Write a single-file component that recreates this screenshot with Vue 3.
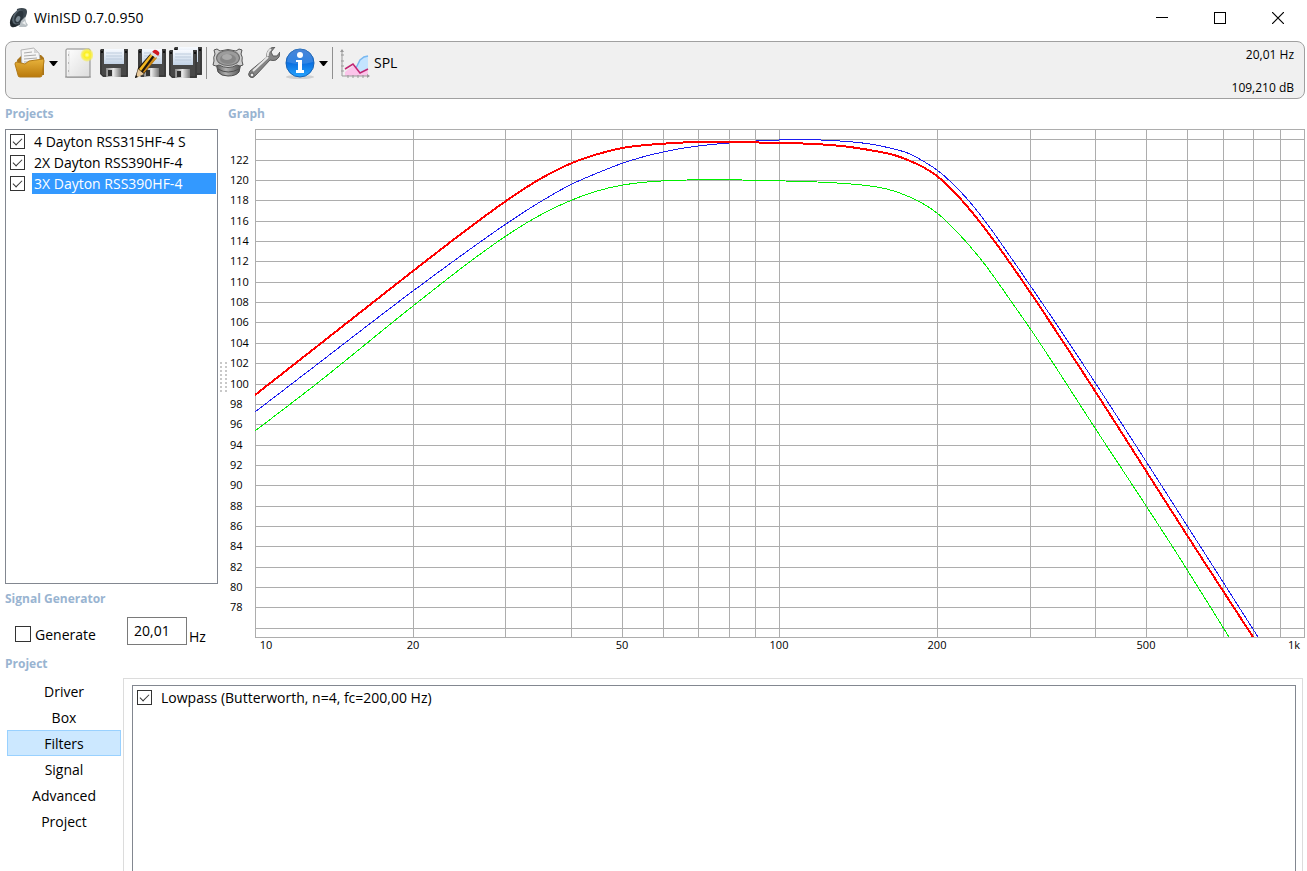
<template>
    <div class="window">
        <header class="title-bar">
            <svg class="app-icon" width="20" height="20" viewBox="0 0 20 20" aria-hidden="true">
                <path d="M8 1Q13 -1 17 1Q19 3 17 8L13 16L6 19Z" fill="#3b464e" />
                <ellipse cx="7" cy="11" rx="5" ry="9" transform="rotate(28 7 11)" fill="#20282e" />
                <ellipse cx="9" cy="9" rx="5" ry="8" transform="rotate(28 9 9)" fill="#56636d" />
                <ellipse cx="10" cy="9" rx="4" ry="7" transform="rotate(28 10 9)" fill="#2c363e" />
                <ellipse cx="9" cy="11" rx="2" ry="3" transform="rotate(28 9 11)" fill="#7d8b95" />
                <path d="M12 13L16 9L17 14L19 17L17 19H10Z" fill="#b9c0c4" />
                <path d="M13 15L16 13L17 17Z" fill="#eef0f1" />
            </svg>
            <span class="title">WinISD 0.7.0.950</span>
            <div class="window-buttons">
                <button type="button" aria-label="Minimize">
                    <svg width="12" height="12" viewBox="0 0 12 12"><rect y="5" width="12" height="1" /></svg>
                </button>
                <button type="button" aria-label="Maximize">
                    <svg width="12" height="12" viewBox="0 0 12 12"><path d="M0 0H12V12H0ZM1 1V11H11V1Z" fill-rule="evenodd" /></svg>
                </button>
                <button type="button" aria-label="Close">
                    <svg width="12" height="12" viewBox="0 0 12 12"><path d="M0 0L12 12M12 0L0 12" stroke="#000" stroke-width="1.2" /></svg>
                </button>
            </div>
        </header>

        <div class="toolbar">
            <div class="tools">
                <svg width="0" height="0" class="defs" aria-hidden="true">
                    <defs>
                        <linearGradient id="gold" x1="0" y1="0" x2="0" y2="1">
                            <stop offset="0" stop-color="#e8b33c" />
                            <stop offset="1" stop-color="#b9790b" />
                        </linearGradient>
                        <linearGradient id="paper" x1="0" y1="0" x2="1" y2="1">
                            <stop offset="0" stop-color="#ffffff" />
                            <stop offset="1" stop-color="#dcdcdc" />
                        </linearGradient>
                        <linearGradient id="sheet" x1="0" y1="0" x2="0" y2="1">
                            <stop offset="0" stop-color="#f7faff" />
                            <stop offset="1" stop-color="#c3d3e6" />
                        </linearGradient>
                        <linearGradient id="steel" x1="0" y1="0" x2="1" y2="0">
                            <stop offset="0" stop-color="#8b8b8b" />
                            <stop offset="0.5" stop-color="#e6e6e6" />
                            <stop offset="1" stop-color="#777777" />
                        </linearGradient>
                        <linearGradient id="basket" x1="0" y1="0" x2="1" y2="0">
                            <stop offset="0" stop-color="#5a5a5a" />
                            <stop offset="0.4" stop-color="#b0b0b0" />
                            <stop offset="1" stop-color="#505050" />
                        </linearGradient>
                        <linearGradient id="blue" x1="0" y1="0" x2="0" y2="1">
                            <stop offset="0" stop-color="#2a6fd0" />
                            <stop offset="0.5" stop-color="#0b6fe0" />
                            <stop offset="1" stop-color="#25a5ff" />
                        </linearGradient>
                        <radialGradient id="glow">
                            <stop offset="0" stop-color="#ffffb0" />
                            <stop offset="0.4" stop-color="#fcf01e" />
                            <stop offset="0.75" stop-color="#f8ee4c" stop-opacity="0.8" />
                            <stop offset="1" stop-color="#f8ee4c" stop-opacity="0" />
                        </radialGradient>
                        <g id="disk">
                            <path d="M1 0H28V28H3L0 25V1Z" fill="#484848" />
                            <path d="M1 1H27V27H3L1 25Z" fill="none" stroke="#303030" />
                            <rect x="4" y="0" width="20" height="15" fill="url(#sheet)" />
                            <path d="M6 4H22M6 7H22M6 10H22" stroke="#bdcbdc" />
                            <rect x="1" y="2" width="2" height="2" fill="#111" />
                            <rect x="25" y="2" width="2" height="2" fill="#111" />
                            <rect x="6" y="19" width="15" height="9" fill="url(#steel)" />
                            <rect x="8" y="21" width="4" height="6" fill="#333" />
                        </g>
                    </defs>
                </svg>

                <button type="button" class="tool" aria-label="Open project">
                    <svg width="32" height="32" viewBox="0 0 32 32">
                        <path d="M3 13L8 8H27L30 11V28H4Z" fill="#a8741a" />
                        <path d="M7 3L20 1L25 6L27 20H8Z" fill="#f5f5f5" stroke="#b5b5b5" />
                        <path d="M10 6L18 5M10 9L22 8M10 12L23 11M10 15H24" stroke="#aaa" />
                        <path d="M20 1V6H25Z" fill="#d5d5d5" />
                        <path d="M1 17Q1 15 3 15L11 17L15 14L29 12Q30 12 30 14L28 28Q28 30 26 30H6Q4 30 4 28Z" fill="url(#gold)" stroke="#b27b18" />
                    </svg>
                </button>
                <button type="button" class="arrow" aria-label="Recent projects">
                    <svg width="9" height="5" viewBox="0 0 9 5"><path d="M0 0H9L5 5H4Z" /></svg>
                </button>
                <button type="button" class="tool tool-new" aria-label="New project">
                    <svg width="32" height="32" viewBox="0 0 32 32">
                        <path d="M4 30H30" stroke="#888" stroke-width="2" opacity="0.5" />
                        <rect x="5" y="2" width="24" height="28" rx="1" fill="url(#paper)" stroke="#888" />
                        <path d="M8 4V28" stroke="#ddd" />
                        <path d="M7 8H8M7 16H8M7 24H8" stroke="#888" />
                        <circle cx="26" cy="8" r="7" fill="url(#glow)" />
                    </svg>
                </button>
                <button type="button" class="tool tool-save" aria-label="Save">
                    <svg width="32" height="32" viewBox="0 0 32 32"><use href="#disk" x="2" y="2" /></svg>
                </button>
                <button type="button" class="tool" aria-label="Save as">
                    <svg width="32" height="32" viewBox="0 0 32 32">
                        <use href="#disk" x="4" y="2" />
                        <path d="M17 6L23 10L10 27L1 31L4 21Z" fill="#20170c" />
                        <path d="M17 7L19 8L7 24L5 22Z" fill="#f2b620" />
                        <path d="M21 9L23 11L10 26L9 25Z" fill="#cf8a16" />
                        <path d="M4 22L10 27L2 31Z" fill="#e8c99a" />
                        <path d="M2 28L4 30L1 31Z" fill="#111" />
                        <path d="M18 5L20 3Q22 2 25 5Q26 7 24 9Z" fill="#d21820" />
                        <path d="M16 7L18 5L24 9L22 11Z" fill="#dedede" />
                    </svg>
                </button>
                <button type="button" class="tool tool-all" aria-label="Save all">
                    <svg width="33" height="32" viewBox="0 0 33 32">
                        <use href="#disk" x="5" y="0" />
                        <use href="#disk" x="0" y="3" />
                    </svg>
                </button>
                <span class="divider"></span>
                <button type="button" class="tool tool-driver" aria-label="Driver database">
                    <svg width="32" height="32" viewBox="0 0 32 32">
                        <path d="M4 16L6 25Q9 29 16 29Q24 29 27 25L29 16Z" fill="url(#basket)" stroke="#4a4a4a" />
                        <path d="M6 22Q16 28 27 22" fill="none" stroke="#505050" />
                        <path d="M2 3L5 2L8 4Q16 1 24 4L27 2L30 3L29 7Q31 10 30 14L31 18L28 19L25 18Q16 23 7 18L4 19L1 18L2 14Q1 10 3 7Z" fill="#cfcfcf" stroke="#555" />
                        <ellipse cx="16" cy="11" rx="12" ry="8" fill="#6c6c6c" />
                        <ellipse cx="16" cy="11" rx="11" ry="7" fill="#9c9c9c" />
                        <ellipse cx="16" cy="12" rx="8" ry="5" fill="#868686" />
                        <ellipse cx="15" cy="10" rx="5" ry="3" fill="#aaa" />
                    </svg>
                </button>
                <button type="button" class="tool tool-wrench" aria-label="Options">
                    <svg width="32" height="32" viewBox="0 0 32 32">
                        <path d="M19 10Q18 4 23 1L27 0L23 5L25 9L29 9L32 5Q32 11 28 13Q25 14 22 13L8 28Q5 32 2 30Q-1 28 2 24Z" fill="#858585" stroke="#5d5d5d" />
                        <path d="M20 10L5 24M20 9Q19 5 23 2" stroke="#e5e5e5" stroke-width="2" fill="none" />
                        <circle cx="4" cy="28" r="2" fill="#eee" stroke="#555" />
                    </svg>
                </button>
                <button type="button" class="tool tool-info" aria-label="Information">
                    <svg width="32" height="32" viewBox="0 0 32 32">
                        <ellipse cx="16" cy="30" rx="14" ry="2" fill="#bbb" opacity="0.6" />
                        <circle cx="16" cy="16" r="14" fill="url(#blue)" stroke="#1763b5" />
                        <path d="M3 15A13 13 0 0 1 29 15Q16 19 3 15Z" fill="#fff" opacity="0.15" />
                        <circle cx="16" cy="8" r="3" fill="#fff" />
                        <path d="M12 13H18V23H20V26H12V23H14V15H12Z" fill="#fff" />
                    </svg>
                </button>
                <button type="button" class="arrow" aria-label="More information">
                    <svg width="9" height="5" viewBox="0 0 9 5"><path d="M0 0H9L5 5H4Z" /></svg>
                </button>
                <span class="divider"></span>
                <button type="button" class="plot-type">
                    <svg width="32" height="32" viewBox="0 0 32 32">
                        <path d="M5 29V25L14 18L20 21L25 12L28 10V29Z" fill="#fbc5ea" />
                        <path d="M17 20L20 13L24 9H28V22L21 26Z" fill="#c4e4ff" />
                        <path d="M16 21L20 13L24 10L28 9" stroke="#78b8f0" fill="none" stroke-width="1.5" />
                        <path d="M5 22L13 17L20 26L28 22" stroke="#c02672" fill="none" stroke-width="1.5" />
                        <path d="M2 3V29H29" stroke="#999" fill="none" />
                        <path d="M1 8H4M1 14H4M1 19H4M1 24H4M8 28V31M13 28V31M18 28V31M23 28V31" stroke="#999" />
                        <path d="M0 5L2 2L4 5ZM27 27L30 29L27 31Z" fill="#999" />
                    </svg>
                    SPL
                </button>
            </div>
            <div class="readout">
                <span>20,01 Hz</span>
                <span>109,210 dB</span>
            </div>
        </div>

        <main class="main">
            <section class="side">
                <h2>Projects</h2>
                <ul class="projects">
                    <li v-for="(project, index) in projects" :key="project.name">
                        <input type="checkbox" :id="'project-' + index" v-model="project.visible" />
                        <label :for="'project-' + index" :class="{ selected: index === selectedProject }">{{ project.name }}</label>
                    </li>
                </ul>
                <h2>Signal Generator</h2>
                <div class="generator">
                    <input type="checkbox" id="generate" v-model="generate" />
                    <label for="generate">Generate</label>
                    <input type="text" id="frequency" v-model="frequency" />
                    <label for="frequency" class="unit">Hz</label>
                </div>
            </section>

            <div class="splitter"><span></span></div>

            <section class="graph">
                <h2>Graph</h2>
                <svg class="plot" viewBox="-27 0 1077 526" role="img" aria-label="SPL">
                    <g class="grid">
                        <rect v-for="x in gridX" :key="'x' + x" :x="x" y="0" width="1" height="509" />
                        <rect v-for="y in gridY" :key="'y' + y" x="0" :y="y" width="1050" height="1" />
                    </g>
                    <path v-for="curve in curves" :key="curve.color" :d="toPath(curve.points)" :stroke="curve.color"
                        :stroke-width="curve.width" class="curve" />
                    <text v-for="tick in ticksY" :key="'ty' + tick.label" x="-25" :y="tick.y">{{ tick.label }}</text>
                    <text v-for="tick in ticksX" :key="'tx' + tick.label" :x="tick.x" y="520" text-anchor="middle">{{ tick.label }}</text>
                </svg>
            </section>
        </main>

        <section class="project">
            <h2>Project</h2>
            <div class="project-body">
                <nav class="tabs">
                    <button v-for="tab in tabs" :key="tab" type="button" :class="{ active: tab === activeTab }"
                        @click="activeTab = tab">{{ tab }}</button>
                </nav>
                <div class="panel">
                    <div class="filters">
                        <input type="checkbox" id="lowpass" v-model="lowpass" />
                        <label for="lowpass">Lowpass (Butterworth, n=4, fc=200,00 Hz)</label>
                    </div>
                </div>
            </div>
        </section>
    </div>
</template>

<script setup>
import { ref } from 'vue';

const projects = ref([
    { name: '4 Dayton RSS315HF-4 S', visible: true },
    { name: '2X Dayton RSS390HF-4', visible: true },
    { name: '3X Dayton RSS390HF-4', visible: true },
]);
const selectedProject = ref(2);
const generate = ref(false);
const frequency = ref('20,01');
const lowpass = ref(true);
const tabs = ['Driver', 'Box', 'Filters', 'Signal', 'Advanced', 'Project'];
const activeTab = ref('Filters');

// plot area: 10 Hz - 1 kHz (log), 75 - 125 dB
const plotHeight = 508;
const decadeWidth = 524.4;
const dbHeight = 10.18;
const freqToX = (f) => Math.round(Math.log10(f / 10) * decadeWidth);
const dbToY = (db) => Math.round((125 - db) * dbHeight);

const gridX = [];
for (let f = 10; f < 100; f += 10) gridX.push(freqToX(f));
for (let f = 100; f <= 1000; f += 100) gridX.push(freqToX(f));

const gridY = [0, plotHeight];
const ticksY = [];
for (let db = 76; db <= 124; db += 2) {
    gridY.push(dbToY(db));
    if (db > 76 && db < 124) ticksY.push({ label: db, y: dbToY(db) + 4 });
}

const ticksX = [
    { label: '10', x: 11 },
    { label: '20', x: freqToX(20) },
    { label: '50', x: freqToX(50) },
    { label: '100', x: freqToX(100) },
    { label: '200', x: freqToX(200) },
    { label: '500', x: freqToX(500) },
    { label: '1k', x: 1039 },
];

const curves = [
    {
        color: '#00f000',
        width: 1,
        points: [[0, 302], [60, 256], [158, 177], [224, 126], [251, 107], [273, 93], [293, 82], [317, 71], [342, 62],
            [368, 56], [392, 53], [432, 51], [487, 51], [530, 52], [582, 54], [615, 57], [632, 60], [650, 66],
            [667, 74], [682, 84], [703, 104], [728, 133], [758, 175], [772, 195], [840, 299], [926, 431],
            [974, 508]],
    },
    {
        color: '#1c1cf0',
        width: 1,
        points: [[0, 283], [60, 237], [158, 162], [207, 126], [251, 95], [285, 73], [317, 55], [340, 45], [368, 34],
            [408, 23], [443, 17], [474, 14], [524, 11], [585, 12], [615, 15], [635, 19], [655, 25],
            [668, 32], [682, 41], [698, 55], [714, 72], [730, 92], [759, 133], [802, 196],
            [954, 431], [1003, 508]],
    },
    {
        color: '#ff0000',
        width: 2,
        points: [[0, 266], [60, 219], [158, 142], [218, 96], [251, 72], [285, 50], [317, 34], [343, 25],
            [367, 19], [404, 15], [440, 13], [474, 13], [524, 14], [560, 15], [595, 18], [620, 22], [639, 26],
            [655, 32], [668, 38], [682, 47], [702, 66], [716, 82], [740, 113], [775, 163], [797, 196],
            [948, 431], [998, 508]],
    },
];

// smooth the points, slopes weighted by the distance to the neighbours
const toPath = (points) => {
    const last = points.length - 1;
    const secant = (i) => (points[i + 1][1] - points[i][1]) / (points[i + 1][0] - points[i][0]);
    const slope = (i) => {
        if (i === 0) return secant(0);
        if (i === last) return secant(last - 1);
        const before = points[i][0] - points[i - 1][0];
        const after = points[i + 1][0] - points[i][0];
        return (secant(i - 1) * after + secant(i) * before) / (before + after);
    };
    let d = `M${points[0]}`;
    for (let i = 0; i < last; i++) {
        const [x1, y1] = points[i];
        const [x2, y2] = points[i + 1];
        const h = (x2 - x1) / 3;
        d += `C${x1 + h},${y1 + slope(i) * h} ${x2 - h},${y2 - slope(i + 1) * h} ${x2},${y2}`;
    }
    return d;
};
</script>

<style>
body {
    margin: 0;
    background-color: #fff;
}
</style>

<style scoped>
.window {
    display: flex;
    flex-direction: column;
    height: 100vh;
    overflow: hidden;
    font-family: "Open Sans", "Noto Sans", sans-serif;
    font-size: 14px;
    line-height: 20px;
    color: #000;
}

button {
    display: flex;
    align-items: center;
    justify-content: center;
    padding: 0;
    border: none;
    background: none;
    font: inherit;
    color: inherit;
}

h2 {
    margin: 0;
    font-size: 12px;
    line-height: 30px;
    color: #99b4d1;
}

.title-bar {
    display: flex;
    align-items: center;
    height: 35px;
    padding-left: 9px;
}

.title {
    margin-left: 5px;
}

.window-buttons {
    display: flex;
    margin-left: auto;
}

.window-buttons button {
    width: 58px;
    height: 34px;
}

.toolbar {
    display: flex;
    justify-content: space-between;
    box-sizing: border-box;
    height: 58px;
    margin: 6px 2px 0 5px;
    padding: 5px 10px 0 8px;
    border: 1px solid #a0a0a0;
    border-radius: 8px;
    background-color: #f0f0f0;
}

.tools {
    display: flex;
    align-items: center;
    height: 32px;
}

.defs {
    position: absolute;
}

.arrow {
    width: 9px;
    height: 32px;
    margin-left: 3px;
}

.tool-new {
    margin-left: 3px;
}

.tool-save {
    margin-left: 5px;
}

.tool + .tool:not(.tool-save) {
    margin-left: 4px;
}

.tools .tool.tool-all {
    margin-left: 3px;
}

.divider {
    width: 1px;
    height: 32px;
    margin: 0 5px 0 4px;
    background-color: #909090;
}

.plot-type {
    gap: 2px;
    margin-left: 2px;
}

.readout {
    display: flex;
    flex-direction: column;
    gap: 13px;
    margin-top: -2px;
    font-size: 12px;
    text-align: right;
}

.main {
    display: flex;
    padding: 0 2px 0 5px;
}

.side {
    display: flex;
    flex-direction: column;
    flex: 0 0 213px;
}

.projects {
    flex: 1;
    margin: 0;
    padding: 1px;
    border: 1px solid #828790;
    list-style: none;
}

.projects li {
    display: flex;
    align-items: center;
    gap: 7px;
    padding-left: 3px;
}

.projects label {
    flex: 1;
    padding-left: 2px;
    line-height: 21px;
    white-space: nowrap;
}

.projects .selected {
    background-color: #3399ff;
    color: #fff;
}

input[type="checkbox"] {
    appearance: none;
    box-sizing: border-box;
    flex: none;
    width: 15px;
    height: 15px;
    margin: 0;
    border: 1px solid #333;
    background-color: #fff;
}

input[type="checkbox"]:checked::before {
    content: "";
    display: block;
    width: 9px;
    height: 5px;
    margin: 3px 0 0 2px;
    box-sizing: border-box;
    border-left: 1px solid #333;
    border-bottom: 1px solid #333;
    transform: rotate(-45deg);
}

.generator {
    display: flex;
    align-items: center;
    height: 32px;
    padding: 1px 0 8px 10px;
}

#generate {
    width: 16px;
    height: 16px;
    margin: 6px 4px 0 0;
}

.generator label {
    padding-top: 8px;
}

#frequency {
    box-sizing: border-box;
    width: 60px;
    height: 28px;
    margin-left: auto;
    padding: 0 6px 2px;
    border: 1px solid #7a7a7a;
    font: inherit;
    color: inherit;
}

.generator .unit {
    width: 29px;
    padding: 12px 0 0 2px;
}

.splitter {
    display: flex;
    flex: 0 0 10px;
    align-items: center;
    justify-content: center;
}

.splitter span {
    width: 7px;
    height: 30px;
    background-image: linear-gradient(#c8c8c8 2px, transparent 2px);
    background-size: 2px 4px;
    mask-image: linear-gradient(to right, #000 2px, transparent 2px);
    mask-size: 5px 100%;
}

.graph {
    flex: 1;
    min-width: 0;
}

.plot {
    display: block;
    width: 100%;
    font-size: 11px;
}

.grid {
    fill: #adadad;
}

.curve {
    fill: none;
    shape-rendering: crispEdges;
}

.project {
    display: flex;
    flex: 1;
    flex-direction: column;
    min-height: 0;
}

.project h2 {
    padding-left: 5px;
    line-height: 18px;
    margin-bottom: 5px;
}

.project-body {
    display: flex;
    flex: 1;
    min-height: 0;
}

.tabs {
    display: flex;
    flex: 0 0 114px;
    flex-direction: column;
    padding: 0 2px 0 7px;
}

.tabs button {
    box-sizing: border-box;
    height: 26px;
    padding-top: 2px;
    border: 1px solid transparent;
}

.tabs .active {
    border-color: #99d1ff;
    background-color: #cce8ff;
}

.panel {
    display: flex;
    flex: 1;
    padding: 6px 6px 0 8px;
    border: 1px solid #dcdcdc;
    border-bottom: none;
    margin-right: 4px;
}

.filters {
    display: flex;
    flex: 1;
    align-items: flex-start;
    padding: 4px;
    border: 1px solid #828790;
    border-bottom: none;
}

.filters label {
    padding-left: 9px;
    line-height: 16px;
}
</style>
